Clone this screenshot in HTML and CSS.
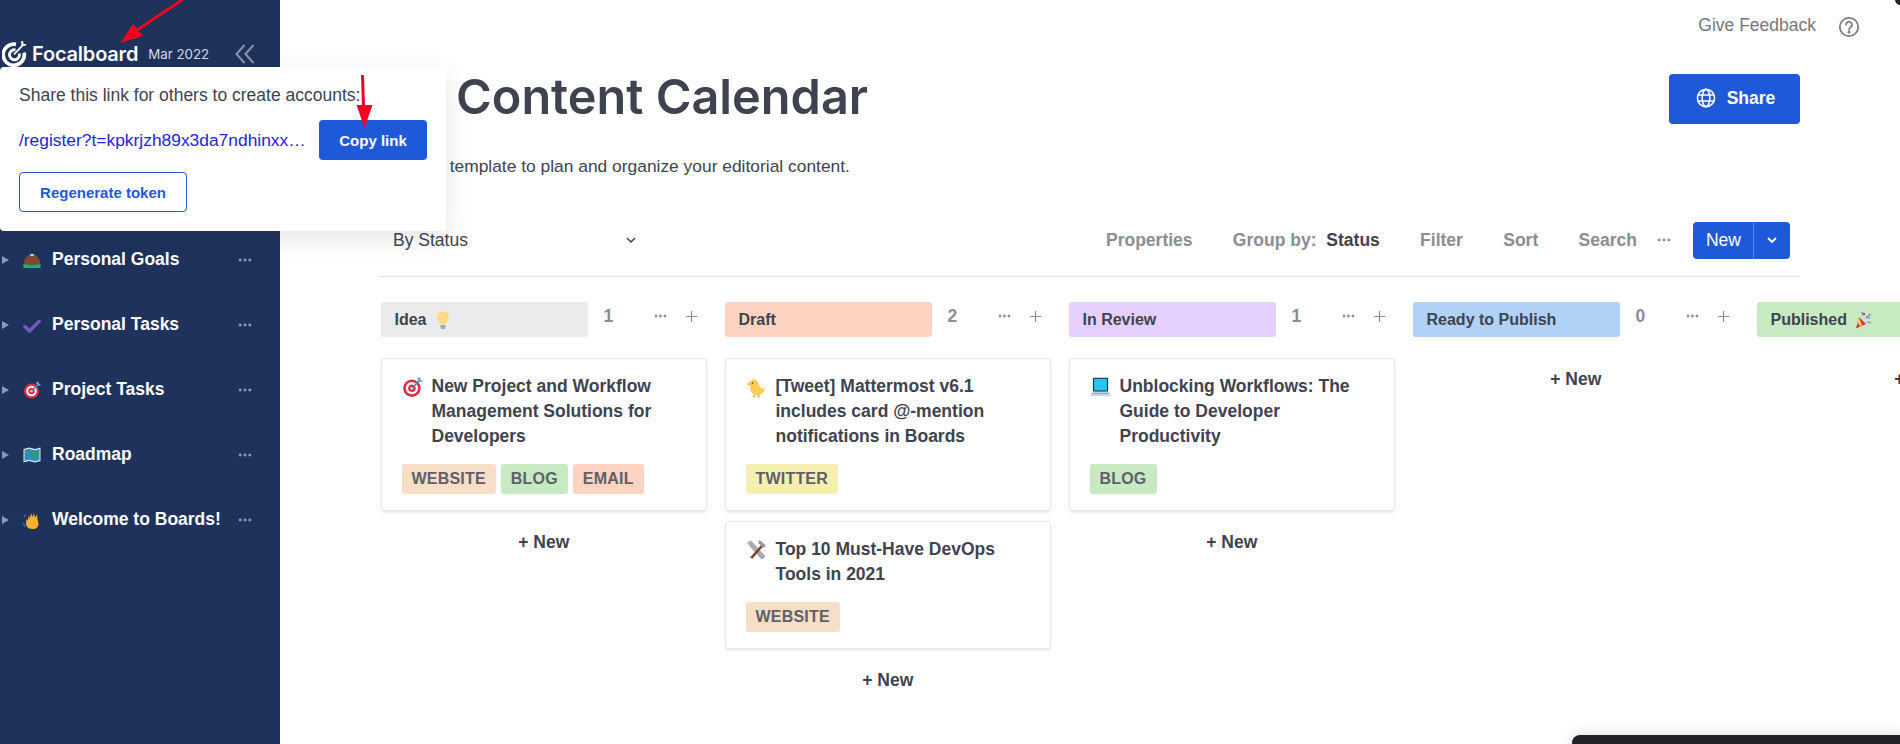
FILE: index.html
```html
<!DOCTYPE html>
<html lang="en">
<head>
<meta charset="utf-8">
<title>Content Calendar</title>
<link rel="stylesheet" href="styles.css">
</head>
<body>
<svg class="defs" width="0" height="0" aria-hidden="true">
  <symbol id="e-target" viewBox="0 0 36 36">
    <circle cx="17" cy="20" r="15" fill="#dd2e44"/><circle cx="17" cy="20" r="10.5" fill="#fff"/><circle cx="17" cy="20" r="6.5" fill="#dd2e44"/><circle cx="17" cy="20" r="2.5" fill="#fff"/>
    <path d="M17 20L30 7" stroke="#3b88c3" stroke-width="2.5"/><path d="M26 3l2 5 5 2 3-3-4-1-1-5z" fill="#55acee"/>
  </symbol>
  <symbol id="e-dots" viewBox="0 0 16 4"><circle cx="2.5" cy="2" r="1.7"/><circle cx="8" cy="2" r="1.7"/><circle cx="13.5" cy="2" r="1.7"/></symbol>
  <symbol id="e-plus" viewBox="0 0 14 14"><path d="M7 1v12M1 7h12" stroke="currentColor" stroke-width="1.3" fill="none"/></symbol>
</svg>

<aside class="sidebar">
  <header class="side-head">
    <svg class="logo" viewBox="0 0 26 28" fill="none" stroke="#fff">
      <path d="M14.500 4.500A11 11 0 1 0 23 13" stroke-width="3.800"/>
      <path d="M14 10.200A5.200 5.200 0 1 0 18 14" stroke-width="3"/>
      <path d="M12.500 15L23 4" stroke-width="1.800"/>
      <path d="M21 1v4h4" stroke-width="2"/>
    </svg>
    <span class="brand">Focalboard</span>
    <span class="version">Mar 2022</span>
    <svg class="collapse" viewBox="0 0 21 20" fill="none" stroke="#8b94ab" stroke-width="2"><path d="M10 1L2 10l8 9M19 1l-8 9 8 9"/></svg>
  </header>
  <nav class="side-list">
    <div class="side-item">
      <span class="tri"></span>
      <svg class="side-emoji" viewBox="0 0 36 36"><path d="M1 29C1 14 11 5 18 5s17 9 17 24z" fill="#7a4a38"/><path d="M14 8c3-3 6-3 8 0l-2 2-2-1-2 1z" fill="#f5f8fa"/><path d="M1 26c8 3 26 3 34 0v8H1z" fill="#12b76a"/></svg>
      <span class="side-name">Personal Goals</span>
      <svg class="side-dots"><use href="#e-dots"/></svg>
    </div>
    <div class="side-item">
      <span class="tri"></span>
      <svg class="side-emoji" viewBox="0 0 36 36"><path d="M4 21l9 9L32 11" fill="none" stroke="#7457c0" stroke-width="7" stroke-linecap="round" stroke-linejoin="round"/></svg>
      <span class="side-name">Personal Tasks</span>
      <svg class="side-dots"><use href="#e-dots"/></svg>
    </div>
    <div class="side-item">
      <span class="tri"></span>
      <svg class="side-emoji"><use href="#e-target"/></svg>
      <span class="side-name">Project Tasks</span>
      <svg class="side-dots"><use href="#e-dots"/></svg>
    </div>
    <div class="side-item">
      <span class="tri"></span>
      <svg class="side-emoji" viewBox="0 0 36 36"><path d="M1 6l11-3 12 3 11-3v27l-11 3-12-3-11 3z" fill="#e1e8ed"/><path d="M3 8l9-2.500 12 3 9-2.500v22l-9 2.500-12-3-9 2.500z" fill="#2a8fc4"/><path d="M7 10l6 2 1 6-4 3-3-4zM20 12l8-2 2 8-5 2 1 6-5-2-2-6z" fill="#3e9b4b"/></svg>
      <span class="side-name">Roadmap</span>
      <svg class="side-dots"><use href="#e-dots"/></svg>
    </div>
    <div class="side-item">
      <span class="tri"></span>
      <svg class="side-emoji" viewBox="0 0 36 36"><path d="M12 35c-4-2-6-6-6-11l1-8 3 3 1-10 3 5 2-10 3 8 3-8 2 9 4-6 1 9 2 10c0 6-5 10-11 10z" fill="#f5b130"/><path d="M6 7L2 12M1 23c0 4 2 7 4 9" stroke="#3b66c9" stroke-width="2.500" fill="none"/></svg>
      <span class="side-name">Welcome to Boards!</span>
      <svg class="side-dots"><use href="#e-dots"/></svg>
    </div>
  </nav>
</aside>

<main class="content">
  <div class="topbar">
    <span class="feedback">Give Feedback</span>
    <svg class="help" viewBox="0 0 22 22" fill="none" stroke="#75777f" stroke-width="1.700"><circle cx="11" cy="11" r="9.200"/><path d="M8 8.800a3 3 0 1 1 4.600 2.500c-1 .6-1.600 1.200-1.600 2.400" stroke-linecap="round"/><circle cx="11" cy="16.200" r=".6" fill="#75777f"/></svg>
  </div>
  <div class="title-row">
    <h1 class="title">Content Calendar</h1>
    <button class="share" type="button">
      <svg class="globe" viewBox="0 0 20 20" fill="none" stroke="#fff" stroke-width="1.600"><circle cx="10" cy="10" r="8.600"/><ellipse cx="10" cy="10" rx="3.800" ry="8.600"/><path d="M2 7h16M2 13h16"/></svg>
      Share
    </button>
  </div>
  <p class="subtitle">Use this template to plan and organize your editorial content.</p>

  <div class="toolbar">
    <div class="view-select">
      <span>By Status</span>
      <svg class="chev" viewBox="0 0 12 8" fill="none" stroke="#3f4350" stroke-width="1.500"><path d="M2 2l4 4 4-4"/></svg>
    </div>
    <div class="tools">
      <span class="tool">Properties</span>
      <span class="tool">Group by: <b class="tool-val">Status</b></span>
      <span class="tool">Filter</span>
      <span class="tool">Sort</span>
      <span class="tool">Search</span>
    </div>
    <svg class="tool-dots"><use href="#e-dots"/></svg>
    <div class="new-btn">
      <span class="new-main">New</span>
      <span class="new-drop"><svg class="new-chev" viewBox="0 0 12 8" fill="none" stroke="#fff" stroke-width="1.800"><path d="M2 2l4 4 4-4"/></svg></span>
    </div>
  </div>

  <div class="board">
    <section class="col">
      <div class="col-head">
        <div class="col-name c-grey">Idea
          <svg class="head-emoji" viewBox="0 0 36 36"><path d="M18 1c-7 0-12 5-12 11 0 6 5 8 6 15h12c1-7 6-9 6-15 0-6-5-11-12-11z" fill="#ffd983"/><path d="M13 28h10v6l-2 2h-6l-2-2z" fill="#99aab5"/></svg>
        </div>
        <span class="col-count">1</span>
        <svg class="col-dots"><use href="#e-dots"/></svg>
        <svg class="col-plus"><use href="#e-plus"/></svg>
      </div>
      <article class="card">
        <div class="card-title">
          <svg class="card-emoji"><use href="#e-target"/></svg>
          <span>New Project and Workflow Management Solutions for Developers</span>
        </div>
        <div class="tags"><span class="tag t-orange">WEBSITE</span><span class="tag t-green">BLOG</span><span class="tag t-red">EMAIL</span></div>
      </article>
      <div class="add-new">+ New</div>
    </section>

    <section class="col">
      <div class="col-head">
        <div class="col-name c-red">Draft</div>
        <span class="col-count">2</span>
        <svg class="col-dots"><use href="#e-dots"/></svg>
        <svg class="col-plus"><use href="#e-plus"/></svg>
      </div>
      <article class="card">
        <div class="card-title">
          <svg class="card-emoji" viewBox="0 0 36 36"><path d="M14 5c-5 0-8 4-8 8 0 2 .5 3 1.500 5-1 8 4 14 12 14 8 0 13-6 13-14-1 2-4 3-6 2-2-1-4-4-5-8-1-4-4-7-7.500-7z" fill="#fdcb58"/><path d="M6 11l-5 2 5 2z" fill="#f4900c"/><circle cx="11" cy="11" r="1.300" fill="#292f33"/><path d="M15 31v4h-3M21 31v4h3" stroke="#f4900c" stroke-width="1.500" fill="none"/></svg>
          <span>[Tweet] Mattermost v6.1 includes card @-mention notifications in Boards</span>
        </div>
        <div class="tags"><span class="tag t-yellow">TWITTER</span></div>
      </article>
      <article class="card">
        <div class="card-title">
          <svg class="card-emoji" viewBox="0 0 36 36"><path d="M5 3l4-1 24 26-3 5-4 1L4 9zM2 6l3-3 3 3-3 3z" fill="#b0aab5"/><path d="M7 31L27 8l3 3L11 33z" fill="#7d4533"/><path d="M23 1l11 9-4 5-9-9z" fill="#9b93a3"/></svg>
          <span>Top 10 Must-Have DevOps Tools in 2021</span>
        </div>
        <div class="tags"><span class="tag t-orange">WEBSITE</span></div>
      </article>
      <div class="add-new">+ New</div>
    </section>

    <section class="col">
      <div class="col-head">
        <div class="col-name c-purple">In Review</div>
        <span class="col-count">1</span>
        <svg class="col-dots"><use href="#e-dots"/></svg>
        <svg class="col-plus"><use href="#e-plus"/></svg>
      </div>
      <article class="card">
        <div class="card-title">
          <svg class="card-emoji" viewBox="0 0 36 36"><rect x="5" y="2" width="26" height="24" rx="2" fill="#292f33"/><rect x="7" y="4" width="22" height="20" fill="#28c4f4"/><path d="M3 26h30l3 8H0z" fill="#ccd6dd"/><path d="M5 29h26" stroke="#8899a6" stroke-width="1.500"/></svg>
          <span>Unblocking Workflows: The Guide to Developer Productivity</span>
        </div>
        <div class="tags"><span class="tag t-green">BLOG</span></div>
      </article>
      <div class="add-new">+ New</div>
    </section>

    <section class="col">
      <div class="col-head">
        <div class="col-name c-blue">Ready to Publish</div>
        <span class="col-count">0</span>
        <svg class="col-dots"><use href="#e-dots"/></svg>
        <svg class="col-plus"><use href="#e-plus"/></svg>
      </div>
      <div class="add-new add-top">+ New</div>
    </section>

    <section class="col">
      <div class="col-head">
        <div class="col-name c-green">Published
          <svg class="head-emoji" viewBox="0 0 36 36"><path d="M10 12l14 14-20 9z" fill="#dd2e44"/><path d="M10 12l6 17-4 2-5-7z" fill="#ffcc4d"/><circle cx="20" cy="6" r="2" fill="#a0041e"/><circle cx="30" cy="14" r="2" fill="#55acee"/><path d="M16 2l2 7M24 14l9-8M26 22l8 1" stroke="#9266cc" stroke-width="2.500" fill="none"/></svg>
        </div>
      </div>
      <div class="add-new add-top">+ New</div>
    </section>
  </div>
</main>

<div class="popup">
  <p class="popup-text">Share this link for others to create accounts:</p>
  <div class="popup-row">
    <a class="popup-link">/register?t=kpkrjzh89x3da7ndhinxxjqkwhzmwbqkmyn7cxp5yq</a>
    <button class="copy" type="button">Copy link</button>
  </div>
  <button class="regen" type="button">Regenerate token</button>
</div>

<svg class="arrows" viewBox="0 0 1900 744" fill="none">
  <path d="M182 0L128 36" stroke="#f2001f" stroke-width="3"/>
  <path d="M120 43l13-19 10 12z" fill="#f2001f"/>
  <path d="M362.500 75l1 32" stroke="#f2001f" stroke-width="3"/>
  <path d="M364.500 128l-8-23h16z" fill="#f2001f"/>
</svg>
<div class="dock"></div>
<div class="corner"></div>
</body>
</html>
```

FILE: styles.css
```css
* { box-sizing: border-box; }
html, body { margin: 0; height: 100%; }
body {
  display: flex;
  height: 744px;
  overflow: hidden;
  background: #fff;
  color: #3f4350;
  font-family: "Liberation Sans", Arial, sans-serif;
  font-size: 17.5px;
}
.defs { position: absolute; }

/* sidebar */
.sidebar {
  flex: 0 0 280px;
  background: #1e325c;
  color: #fff;
  padding-top: 40px;
}
.side-head { display: flex; align-items: center; height: 27px; padding-left: 2px; }
.logo { width: 25px; height: 27px; flex: none; }
.brand {
  margin-left: 5px;
  font-family: Inter, "Liberation Sans", sans-serif;
  font-size: 20px;
  font-weight: 600;
  letter-spacing: -.2px;
}
.version {
  margin-left: 10px;
  font-family: Inter, "Liberation Sans", sans-serif;
  font-size: 13.3px;
  color: #d5d9e2;
}
.collapse { width: 22px; height: 20px; margin-left: 25px; }
.side-list { display: flex; flex-direction: column; margin-top: 160px; }
.side-item { display: flex; align-items: center; height: 65px; padding-left: 2px; }
.tri {
  width: 0; height: 0; flex: none;
  border-left: 7px solid #8e98ae;
  border-top: 4px solid transparent;
  border-bottom: 4px solid transparent;
}
.side-emoji { width: 18px; height: 18px; margin-left: 14px; flex: none; }
.side-name { margin-left: 11px; font-weight: 700; white-space: nowrap; width: 186px; }
.side-dots { width: 14px; height: 4px; fill: #8e98ae; flex: none; }

/* main */
.content { flex: 1; min-width: 0; overflow: hidden; padding-left: 100px; }
.topbar { display: flex; justify-content: flex-end; align-items: center; height: 52px; padding-right: 40px; }
.feedback { color: #75777f; margin-bottom: 2px; }
.help { width: 22px; height: 22px; margin: 1px 0 0 22px; }
.title-row { display: flex; justify-content: space-between; align-items: flex-start; height: 108px; padding: 22px 100px 0 76px; }
.title { margin: 0; font-family: Inter, "Liberation Sans", sans-serif; font-size: 48.6px; font-weight: 600; line-height: 46px; white-space: nowrap; }
.share {
  display: flex; align-items: center; justify-content: center; gap: 11px;
  width: 131px; height: 50px;
  padding: 0 0 2px 2px;
  background: #1e59da; color: #fff;
  border: 0; border-radius: 4px;
  font: 700 17.5px "Liberation Sans", Arial, sans-serif;
}
.globe { width: 20px; height: 20px; }
.subtitle { margin: -4px 0 0 2px; font-size: 17.4px; line-height: 20px; }

.toolbar {
  display: flex; align-items: center;
  width: 1420px; height: 55px;
  margin-top: 46px;
  padding: 0 10px 18px 13px;
  border-bottom: 1px solid #dfe0e2;
}
.view-select { display: flex; align-items: center; justify-content: space-between; width: 244px; }
.chev { width: 12px; height: 8px; }
.tools { display: flex; gap: 40.3px; margin-left: 469px; font-weight: 700; color: #8b8d94; white-space: nowrap; }
.tool-val { color: #3f4350; margin-left: 5px; }
.tool-dots { width: 14px; height: 4px; fill: #8b8d94; margin-left: 20px; flex: none; }
.new-btn { display: flex; height: 37px; margin-left: auto; border-radius: 4px; overflow: hidden; background: #1e59da; color: #fff; }
.new-main { display: flex; align-items: center; justify-content: center; width: 61px; padding-left: 1px; border-right: 1px solid #5a86e6; }
.new-drop { display: flex; align-items: center; justify-content: center; width: 36px; }
.new-chev { width: 12px; height: 8px; }

/* board */
.board { display: flex; gap: 17.5px; width: 1800px; margin-top: 25px; padding-left: .5px; }
.col { flex: 0 0 326.5px; }
.col-head { display: flex; align-items: flex-start; height: 35px; }
.col-name {
  display: flex; align-items: center; gap: 7px;
  flex: 0 0 207px; height: 35px;
  padding-left: 14px;
  border-radius: 3px;
  font-size: 16px; font-weight: 700;
  white-space: nowrap;
}
.c-grey { background: #ebebeb; }
.c-red { background: #ffd3c1; }
.c-purple { background: #e6d0ff; }
.c-blue { background: #b1d1f6; }
.c-green { background: #c7eac3; }
.head-emoji { width: 18px; height: 18px; flex: none; }
.col-count { margin: 4px 0 0 16px; width: 50px; color: #8b8d94; font-weight: 700; line-height: 20px; }
.col-dots { width: 13px; height: 4px; margin-top: 12px; fill: #8b8d94; flex: none; }
.col-plus { width: 13px; height: 13px; margin: 8px 0 0 18px; color: #8b8d94; flex: none; }

.card {
  margin-top: 21px;
  padding: 15px 20px 16px;
  background: #fff;
  border: 1px solid #e6e6e8;
  border-radius: 4px;
  box-shadow: 0 2px 3px rgba(63, 67, 80, .10);
}
.card + .card { margin-top: 10px; }
.card-title { display: flex; font-weight: 700; line-height: 25px; }
.card-emoji { width: 21px; height: 22px; flex: none; margin: 2px 9px 0 0; }
.tags { display: flex; gap: 5px; margin-top: 15px; }
.tag {
  height: 30px; padding: 0 10px;
  display: flex; align-items: center;
  border-radius: 3px;
  color: #5f6068;
  font-size: 16px; font-weight: 700;
  letter-spacing: .2px;
}
.t-orange { background: #f7dec6; }
.t-green { background: #c7eac3; }
.t-red { background: #ffd3c1; }
.t-yellow { background: #f5efb0; }
.add-new { margin-top: 21px; text-align: center; font-weight: 700; line-height: 20px; }
.add-top { margin-top: 32px; }

/* popup */
.popup {
  position: absolute; left: 0; top: 67px;
  width: 446px; height: 164px;
  padding: 19px 19px 0;
  background: #fff;
  border-radius: 4px;
  box-shadow: 0 8px 24px rgba(63, 67, 80, .14);
}
.popup-text { margin: 0; line-height: 18px; }
.popup-row { display: flex; align-items: center; gap: 12px; margin-top: 16px; }
.popup-link { flex: 0 0 288px; overflow: hidden; white-space: nowrap; text-overflow: ellipsis; color: #2525d8; font-size: 17.4px; }
.copy, .regen { border-radius: 4px; font: 700 15px "Liberation Sans", Arial, sans-serif; }
.copy { width: 108px; height: 40px; border: 0; background: #1e59da; color: #fff; }
.regen { display: block; width: 168px; height: 40px; margin-top: 12px; border: 1px solid #1e59da; background: #fff; color: #1e59da; }

.arrows { position: absolute; left: 0; top: 0; width: 1900px; height: 744px; pointer-events: none; }
.dock {
  position: absolute; left: 1572px; top: 735px;
  width: 340px; height: 30px;
  background: #212226;
  border-radius: 8px;
  box-shadow: 0 0 16px rgba(0, 0, 0, .14);
}
.corner {
  position: absolute; right: -6px; top: -6px;
  width: 11px; height: 11px;
  background: #212226;
  border-radius: 50%;
}
```
